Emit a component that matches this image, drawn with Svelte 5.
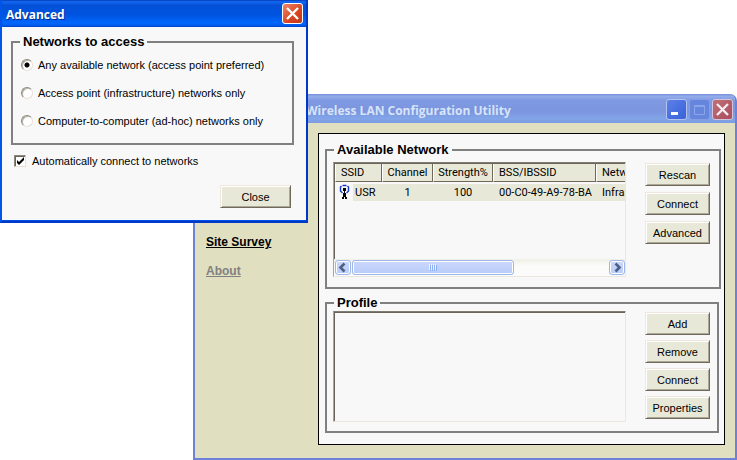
<script>
  let access = "any";
  let autoConnect = true;
  let dialogOpen = true;

  let accessModes = [
    { id: "any", label: "Any available network (access point preferred)" },
    { id: "infra", label: "Access point (infrastructure) networks only" },
    { id: "adhoc", label: "Computer-to-computer (ad-hoc) networks only" },
  ];

  let networks = [
    {
      ssid: "USR",
      channel: 1,
      strength: 100,
      bssid: "00-C0-49-A9-78-BA",
      type: "Infrastructure",
    },
  ];

  let profileActions = ["Add", "Remove", "Connect", "Properties"];
</script>

<style>
  :global(body) {
    background: #fff;
  }

  .desktop {
    position: relative;
    padding: 94px 0 0 193px;
    font-family: "Liberation Sans", Arial, sans-serif;
    font-size: 11px;
    line-height: 14px;
    color: #000;
  }

  button {
    padding: 0;
    font: inherit;
    color: inherit;
  }

  /* title bars */
  .titlebar {
    display: flex;
    align-items: center;
    font-family: "Open Sans", "Noto Sans", sans-serif;
    font-size: 12px;
    font-weight: 700;
    white-space: nowrap;
  }

  .titlebar h1 {
    flex: 1;
    margin: 0;
    padding-top: 2px;
    font-size: inherit;
    line-height: 16px;
  }

  .caption {
    display: flex;
    width: 21px;
    height: 21px;
    border: 1px solid #fff;
    border-radius: 3px;
    box-sizing: border-box;
  }

  .caption svg {
    display: block;
    width: 19px;
    height: 19px;
  }

  /* main window */
  .window {
    border: solid #6d80da;
    border-width: 0 2px 2px;
    border-radius: 7px 7px 0 0;
    background: #e0dfc0;
    overflow: hidden;
  }

  .window .titlebar {
    height: 29px;
    gap: 2px;
    padding: 2px 2px 0 111px;
    box-sizing: border-box;
    color: #d8e4f8;
    background: linear-gradient(#7590dd, #93acea 8%, #7f9ae2 22%, #7b95df 60%, #82a5e8 85%, #7d9be2);
  }

  .window .caption {
    border-color: #b4c4ef;
    background: linear-gradient(135deg, #5a80e8, #3a62d8);
  }

  .window .caption.max {
    border-color: #859de4;
    background: #6685dc;
  }

  .window .caption.exit {
    border-color: #d4c4dc;
    background: linear-gradient(135deg, #c07078, #a84c5c);
  }

  .client {
    display: flex;
    padding: 10px 10px 13px 0;
  }

  nav {
    display: flex;
    flex-direction: column;
    gap: 15px;
    width: 123px;
    padding: 102px 0 0 11px;
    box-sizing: border-box;
  }

  nav a {
    font-size: 12px;
    font-weight: 700;
    color: #808080;
  }

  nav a.current {
    color: #000;
  }

  .panel {
    flex: 1;
    min-width: 0;
    padding: 8px 3px 11px 6px;
    border: 1px solid #000;
    background: #f8f8f8;
  }

  fieldset {
    display: flex;
    min-width: 0;
    margin: 0;
    border: 2px solid #808080;
  }

  legend {
    padding: 0 3px;
    font-size: 13px;
    font-weight: 700;
    line-height: 16px;
  }

  .available {
    gap: 19px;
    padding: 4px 9px 10px 6px;
  }

  .available legend,
  .profile legend {
    margin-left: 1px;
  }

  .profile {
    gap: 19px;
    margin: 6px 2px 0 0;
    padding: 0 7px 9px 6px;
  }

  .list {
    display: flex;
    flex-direction: column;
    flex: 1;
    min-width: 0;
    height: 115px;
    box-sizing: border-box;
    border: 1px solid;
    border-color: #807c70 #ece6e0 #ece6e0 #a8a498;
    box-shadow: inset 1px 1px #6c6458;
    overflow: hidden;
  }

  .profile .list {
    height: 111px;
  }

  .tablewrap {
    flex: 1;
    padding: 1px 0 0 1px;
    overflow: hidden;
  }

  table {
    width: 100%;
    table-layout: fixed;
    border-collapse: separate;
    border-spacing: 0;
    font-family: Roboto, "Liberation Sans", sans-serif;
    font-size: 11px;
  }

  th {
    height: 18px;
    padding: 0;
    box-sizing: border-box;
    border: solid;
    border-width: 0 1px 1px 1px;
    border-color: #fff #706858 #706858 #fff;
    background: #e8e8d8;
    font-weight: 400;
    white-space: nowrap;
    overflow: hidden;
  }

  th:last-child {
    border-right: 0;
  }

  th.left {
    padding-left: 5px;
    text-align: left;
  }

  td {
    height: 17px;
    padding: 0 0 0 6px;
    background: #e8e8d8;
    white-space: nowrap;
    overflow: hidden;
  }

  td.center {
    padding: 0;
    text-align: center;
  }

  td.ssid {
    padding: 0;
    background: none;
  }

  tbody::before {
    content: "";
    display: block;
    height: 2px;
  }

  .station {
    display: flex;
  }

  .station svg {
    width: 18px;
    height: 17px;
  }

  .station span {
    flex: 1;
    padding-left: 2px;
    background: #e8e8d8;
    line-height: 17px;
  }

  .scrollbar {
    display: flex;
    gap: 1px;
    height: 17px;
    padding: 1px 0 1px 1px;
    box-sizing: border-box;
    background: linear-gradient(#efefe6, #fbfbfa 40%);
  }

  .scrollbar button,
  .thumb {
    height: 15px;
    box-sizing: border-box;
    border: 1px solid #9db8e8;
    border-radius: 3px;
    background: linear-gradient(#ccd8fc, #b8ccf8);
    box-shadow: inset 0 0 0 1px #fff;
  }

  .scrollbar button {
    width: 16px;
  }

  .scrollbar svg {
    display: block;
    width: 14px;
    height: 13px;
  }

  .thumb {
    display: flex;
    justify-content: center;
    align-items: center;
    width: 162px;
  }

  .thumb svg {
    width: 9px;
    height: 7px;
  }

  .track {
    flex: 1;
  }

  /* push buttons */
  .push {
    width: 65px;
    height: 23px;
    border: 1px solid;
    border-color: #f0e6e0 #706858 #706858 #f0e6e0;
    background: #e8e8d8;
    box-shadow: inset 1px 1px #fff, inset -1px -1px #aca898;
  }

  .actions {
    display: flex;
    flex-direction: column;
    gap: 6px;
    padding-top: 1px;
  }

  .profile .actions {
    gap: 5px;
  }

  /* advanced dialog, lies over the main window */
  .dialog {
    position: absolute;
    top: 0;
    left: 0;
    width: 308px;
    box-sizing: border-box;
    border: solid #0038c8;
    border-width: 0 2px 2px;
    border-left-color: #0054e8;
    background: #f8f8f8;
    box-shadow: inset 0 -1px #0050e8;
  }

  .dialog .titlebar {
    height: 27px;
    padding: 0 3px 0 4px;
    box-sizing: border-box;
    color: #fff;
    text-shadow: 1px 1px #0a2a90;
    background: linear-gradient(#0838b8, #1468f0 6%, #0450d8 20%, #0054e0 55%, #0066fc 85%, #0060f0 93%, #0040c8);
  }

  .dialog .caption {
    background: linear-gradient(135deg, #f08868, #d84420 60%, #c03818);
  }

  .dialog form {
    display: flex;
    flex-direction: column;
    padding: 7px 12px 13px 9px;
  }

  .access {
    flex-direction: column;
    gap: 14px;
    padding: 8px 8px 15px;
  }

  .access legend {
    margin-left: -1px;
  }

  .option {
    display: flex;
    align-items: center;
    gap: 5px;
  }

  .option input {
    appearance: none;
    width: 12px;
    height: 12px;
    margin: 0;
    border: 1px solid;
    border-color: #8c887c #e8e0d8 #e8e0d8 #8c887c;
    background: #fff;
    box-sizing: border-box;
  }

  .option input[type="radio"] {
    border-radius: 50%;
    box-shadow: inset 1px 1px #b8b4a8;
  }

  .option input[type="radio"]:checked {
    background: radial-gradient(circle, #000 2px, #fff 3px);
  }

  .auto {
    padding: 9px 0 0 3px;
  }

  .auto .tick {
    display: grid;
    margin-right: 1px;
  }

  .auto input,
  .auto svg {
    grid-area: 1 / 1;
    width: 12px;
    height: 12px;
  }

  .auto svg {
    pointer-events: none;
  }

  .auto input {
    box-shadow: inset 1px 1px #686458;
  }

  .dialog .push {
    align-self: flex-end;
    width: 71px;
    margin: 17px 3px 0 0;
  }
</style>

<main class="desktop">
  <section class="window">
    <header class="titlebar">
      <h1>Wireless LAN Configuration Utility</h1>
      <button class="caption" aria-label="Minimize">
        <svg viewBox="0 0 19 19"><path d="M4 12h7v3H4z" fill="#fff" /></svg>
      </button>
      <button class="caption max" aria-label="Maximize" disabled>
        <svg viewBox="0 0 19 19">
          <path d="M4.5 5.5h10v9h-10zM4.5 6.5h10" fill="none" stroke="#8ba5ea" />
        </svg>
      </button>
      <button class="caption exit" aria-label="Close window">
        <svg viewBox="0 0 19 19">
          <path d="M4 4l11 11M15 4L4 15" stroke="#f4ecf0" stroke-width="2.4" />
        </svg>
      </button>
    </header>

    <div class="client">
      <nav>
        <a class="current" href="#survey">Site Survey</a>
        <a href="#about">About</a>
      </nav>

      <div class="panel">
        <fieldset class="available">
          <legend>Available Network</legend>
          <div class="list">
            <div class="tablewrap">
              <table>
                <colgroup>
                  <col style="width: 47px" />
                  <col style="width: 51px" />
                  <col style="width: 60px" />
                  <col style="width: 103px" />
                  <col />
                </colgroup>
                <thead>
                  <tr>
                    <th class="left">SSID</th>
                    <th>Channel</th>
                    <th>Strength%</th>
                    <th class="left">BSS/IBSSID</th>
                    <th class="left">Network</th>
                  </tr>
                </thead>
                <tbody>
                  {#each networks as net}
                    <tr>
                      <td class="ssid">
                        <div class="station">
                          <svg viewBox="0 0 18 17">
                            <path d="M7.500 1.500h4M6.500 2L5.500 3v4L7.500 9M12.500 2l1 1v4l-2 2" fill="none" stroke="#1838d0" stroke-width="1.400" />
                            <path d="M8 4h3v3H8zM9 7h1v2H9zM8 9h3v2H8zM8 11h3v2H8zM7 13h2v2H7zM10 13h2v2h-2z" />
                          </svg>
                          <span>{net.ssid}</span>
                        </div>
                      </td>
                      <td class="center">{net.channel}</td>
                      <td class="center">{net.strength}</td>
                      <td>{net.bssid}</td>
                      <td>{net.type}</td>
                    </tr>
                  {/each}
                </tbody>
              </table>
            </div>
            <div class="scrollbar">
              <button aria-label="Scroll left">
                <svg viewBox="0 0 14 13"><path d="M8.500 2.500l-4 4 4 4" fill="none" stroke="#4d6185" stroke-width="2.600" /></svg>
              </button>
              <div class="thumb">
                <svg viewBox="0 0 9 7">
                  <path d="M.5 0v6M2.500 0v6M4.500 0v6M6.500 0v6" stroke="#eef4fe" />
                  <path d="M1.500 1v6M3.500 1v6M5.500 1v6M7.500 1v6" stroke="#8cb0f8" />
                </svg>
              </div>
              <div class="track"></div>
              <button aria-label="Scroll right">
                <svg viewBox="0 0 14 13"><path d="M5.500 2.500l4 4-4 4" fill="none" stroke="#4d6185" stroke-width="2.600" /></svg>
              </button>
            </div>
          </div>
          <div class="actions">
            <button class="push">Rescan</button>
            <button class="push">Connect</button>
            <button class="push" on:click={() => (dialogOpen = true)}>Advanced</button>
          </div>
        </fieldset>

        <fieldset class="profile">
          <legend>Profile</legend>
          <div class="list"></div>
          <div class="actions">
            {#each profileActions as action}
              <button class="push">{action}</button>
            {/each}
          </div>
        </fieldset>
      </div>
    </div>
  </section>

  {#if dialogOpen}
    <section class="dialog">
      <header class="titlebar">
        <h1>Advanced</h1>
        <button class="caption" aria-label="Close dialog" on:click={() => (dialogOpen = false)}>
          <svg viewBox="0 0 19 19">
            <path d="M4 4l11 11M15 4L4 15" stroke="#fff" stroke-width="2.4" />
          </svg>
        </button>
      </header>
      <form on:submit|preventDefault={() => (dialogOpen = false)}>
        <fieldset class="access">
          <legend>Networks to access</legend>
          {#each accessModes as mode}
            <label class="option">
              <input type="radio" name="access" value={mode.id} bind:group={access} />
              {mode.label}
            </label>
          {/each}
        </fieldset>
        <label class="option auto">
          <span class="tick">
            <input type="checkbox" bind:checked={autoConnect} />
            {#if autoConnect}
              <svg viewBox="0 0 12 12">
                <path d="M3 5v3l2 2 5-5V2L5 7z" />
              </svg>
            {/if}
          </span>
          Automatically connect to networks
        </label>
        <button class="push">Close</button>
      </form>
    </section>
  {/if}
</main>
